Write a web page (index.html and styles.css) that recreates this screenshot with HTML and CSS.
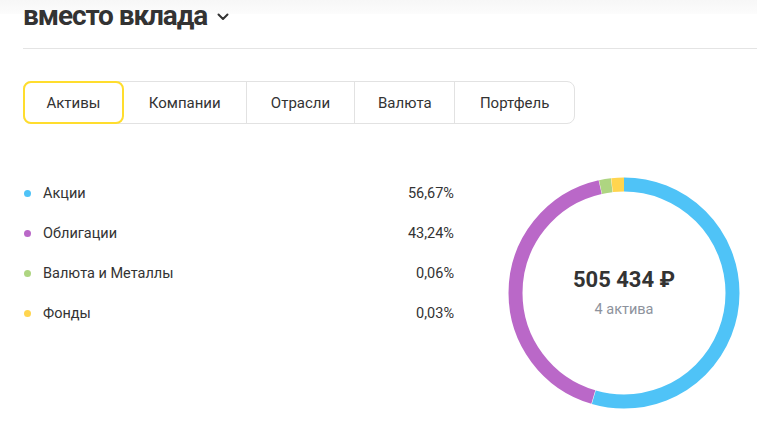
FILE: index.html
```html
<!DOCTYPE html>
<html lang="ru">
<head>
<meta charset="utf-8">
<link rel="stylesheet" href="styles.css">
</head>
<body>
<div class="page">
  <div class="topband"></div>
  <header class="head">
    <h1 class="title">вместо вклада</h1>
    <svg class="chev" width="12" height="8" viewBox="0 0 12 8"><path d="M1.5 1.5 L6 6 L10.5 1.5" fill="none" stroke="#333" stroke-width="2" stroke-linecap="round" stroke-linejoin="round"/></svg>
  </header>
  <div class="divider"></div>
  <nav class="tabs">
    <div class="tab tab-active">Активы</div>
    <div class="tab t2">Компании</div>
    <div class="tab t3">Отрасли</div>
    <div class="tab t4">Валюта</div>
    <div class="tab t5">Портфель</div>
  </nav>
  <section class="content">
    <ul class="legend">
      <li class="row"><span class="dot blue"></span><span class="label">Акции</span><span class="pct">56,67%</span></li>
      <li class="row"><span class="dot purple"></span><span class="label">Облигации</span><span class="pct">43,24%</span></li>
      <li class="row"><span class="dot green"></span><span class="label">Валюта и Металлы</span><span class="pct">0,06%</span></li>
      <li class="row"><span class="dot yellow"></span><span class="label">Фонды</span><span class="pct">0,03%</span></li>
    </ul>
    <div class="chart">
      <svg class="donut" width="232" height="232" viewBox="0 0 232 232">
        <g transform="rotate(-90 116 116)" fill="none" stroke-width="14">
          <circle cx="116" cy="116" r="108.5" stroke="#4fc3f7" stroke-dasharray="371.1 310.6" stroke-dashoffset="0"/>
          <circle cx="116" cy="116" r="108.5" stroke="#ba68c8" stroke-dasharray="285.4 396.3" stroke-dashoffset="-371.6"/>
          <circle cx="116" cy="116" r="108.5" stroke="#aed581" stroke-dasharray="11.2 670.5" stroke-dashoffset="-657.4"/>
          <circle cx="116" cy="116" r="108.5" stroke="#ffd54f" stroke-dasharray="12.8 668.9" stroke-dashoffset="-668.9"/>
        </g>
      </svg>
      <div class="center">
        <div class="sum">505 434 ₽</div>
        <div class="count">4 актива</div>
      </div>
    </div>
  </section>
</div>
</body>
</html>
```

FILE: styles.css
```css
* { box-sizing: border-box; }
html, body { margin: 0; padding: 0; background: #fff; }
body {
  font-family: Roboto, "Noto Sans", Arial, sans-serif;
  color: #333;
  width: 757px;
  height: 431px;
  overflow: hidden;
  position: relative;
}
.page { padding-left: 23px; }
.topband {
  position: absolute;
  left: 0; top: 0; right: 0;
  height: 14px;
  background: linear-gradient(#f7f7f7, #fcfcfc);
}
.head {
  position: relative;
  display: flex;
  align-items: center;
  gap: 10px;
  height: 34px;
}
.title {
  margin: 0;
  font-size: 28px;
  font-weight: 700;
  line-height: 34px;
  color: #333;
  letter-spacing: -1.1px;
  margin-top: -3px;
}
.divider {
  height: 1px;
  background: #e4e4e4;
  margin-top: 14px;
}
.tabs {
  display: flex;
  margin-top: 32px;
  width: 552px;
  height: 43px;
  border: 1px solid #e2e2e2;
  border-radius: 8px;
}
.tab {
  display: flex;
  align-items: center;
  justify-content: center;
  font-size: 15px;
  color: #333;
  border-left: 1px solid #e2e2e2;
  margin-top: -1px;
  margin-bottom: -1px;
}
.tab-active {
  width: 101px;
  border: 2px solid #ffdd2d;
  border-radius: 8px;
  margin-left: -1px;
}
.t2 { width: 122px; border-left: none; }
.t3 { width: 109px; }
.t4 { width: 100px; }
.t5 { width: 120px; }
.content {
  display: flex;
  margin-top: 49px;
}
.legend {
  list-style: none;
  margin: 0;
  padding: 0;
  width: 431px;
}
.row {
  display: flex;
  align-items: center;
  height: 40px;
  font-size: 14.5px;
}
.dot {
  width: 7px;
  height: 7px;
  border-radius: 50%;
  margin-left: 1px;
  margin-right: 12px;
}
.blue { background: #4fc3f7; }
.purple { background: #ba68c8; }
.green { background: #aed581; }
.yellow { background: #ffd54f; }
.label { flex: 1; }
.pct { text-align: right; }
.chart {
  position: relative;
  width: 232px;
  height: 232px;
  margin-left: 54px;
  margin-top: 4px;
}
.donut { display: block; }
.center {
  position: absolute;
  inset: 0;
  display: flex;
  flex-direction: column;
  align-items: center;
  justify-content: center;
}
.sum {
  font-size: 22px;
  font-weight: 700;
  color: #333;
  line-height: 26px;
  margin-top: -2px;
}
.count {
  font-size: 14.5px;
  color: #8d929c;
  margin-top: 8px;
}
```
